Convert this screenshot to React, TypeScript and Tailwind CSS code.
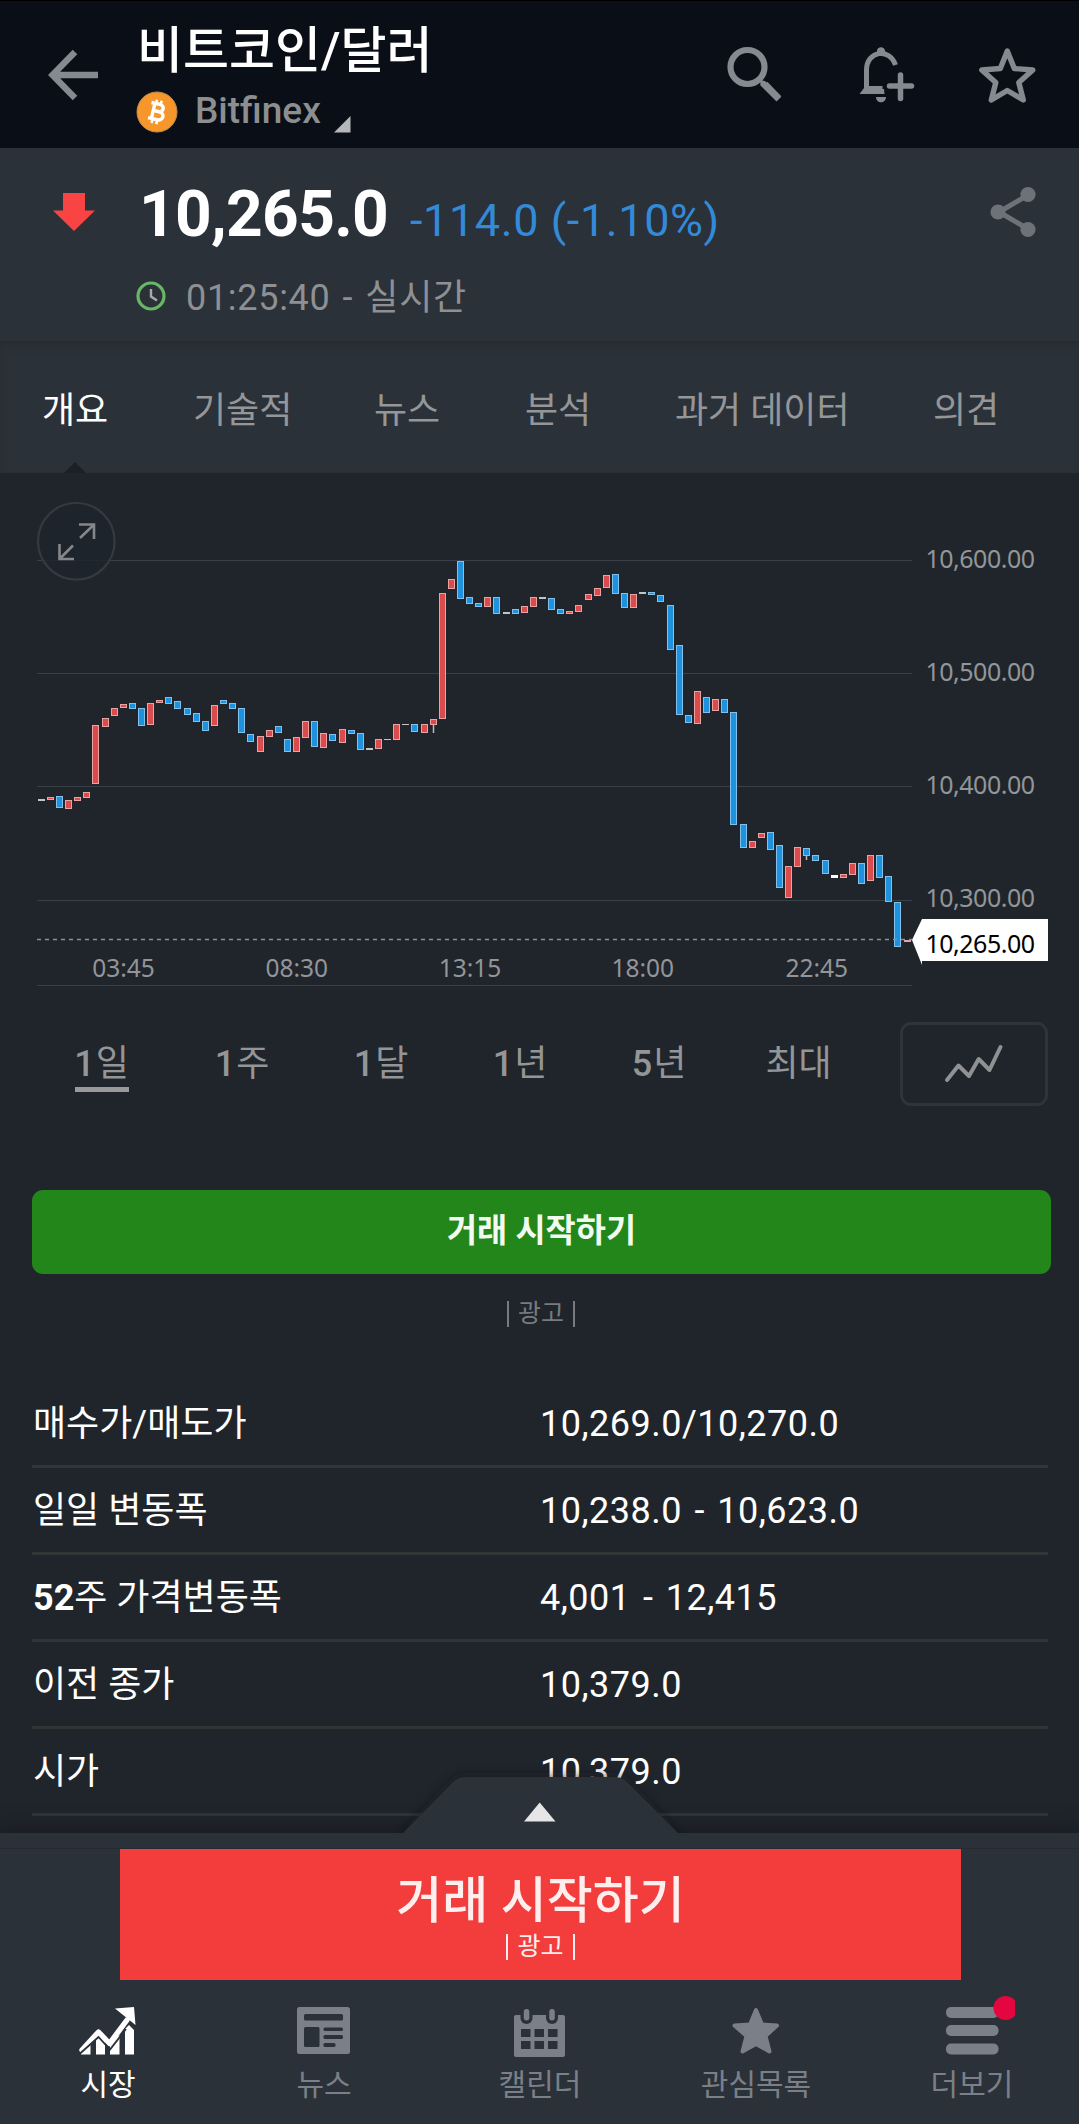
import React from "react";

type Kind = "r" | "b" | "w";
type Candle = [number, number, Kind, number?];

/* Candle bodies: top, bottom (in thirds of a pixel), colour, optional wick end */
const candles: Candle[] = [
  [957, 963, "w"], [951, 960, "r"], [948, 984, "b"], [960, 987, "r"], [951, 963, "r"], [936, 954, "r"],
  [735, 912, "r"], [714, 741, "r"], [684, 708, "r"], [672, 684, "r"], [669, 687, "b"], [684, 738, "b"],
  [669, 735, "r"], [660, 669, "r"], [651, 672, "b"], [663, 687, "b"], [684, 705, "b"], [699, 726, "b"],
  [723, 753, "b"], [675, 738, "r"], [660, 672, "b"], [669, 687, "b"], [684, 759, "b"], [762, 786, "b"],
  [768, 816, "r"], [750, 771, "r"], [738, 759, "b"], [777, 816, "b"], [771, 816, "r"], [723, 774, "r"],
  [723, 801, "b"], [759, 804, "r"], [762, 783, "b"], [747, 789, "r"], [750, 762, "b"], [759, 810, "b"],
  [804, 810, "w"], [777, 807, "r"], [777, 780, "w"], [732, 780, "r"], [732, 735, "w"], [732, 756, "b"],
  [732, 759, "r"], [717, 735, "r", 759], [339, 717, "r"], [297, 327, "r"], [243, 357, "b"], [351, 372, "b"],
  [369, 381, "b"], [351, 381, "r"], [351, 402, "b"], [396, 402, "w"], [387, 402, "b"], [378, 399, "r"],
  [351, 381, "r"], [351, 357, "w"], [354, 390, "b"], [387, 402, "b"], [393, 402, "r"], [375, 396, "r"],
  [342, 360, "r"], [324, 348, "r"], [285, 324, "r"], [282, 342, "b"], [339, 384, "b"], [342, 384, "r"],
  [336, 342, "w"], [336, 345, "b"], [345, 366, "b"], [375, 510, "b"], [495, 705, "b"], [705, 729, "b"],
  [633, 732, "r"], [651, 699, "b"], [657, 693, "r"], [657, 699, "b"], [696, 1035, "b"], [1032, 1104, "b"],
  [1083, 1104, "r"], [1059, 1074, "r"], [1056, 1110, "b"], [1095, 1224, "b"], [1158, 1254, "r"], [1101, 1161, "r"],
  [1104, 1128, "b", 1140], [1125, 1143, "b"], [1140, 1182, "b"], [1185, 1194, "w"], [1182, 1194, "r"], [1149, 1185, "r"],
  [1149, 1212, "b"], [1125, 1203, "r"], [1125, 1194, "b"], [1188, 1266, "b"], [1266, 1401, "b"], [1380, 1386, "r"],
];

const fills = { r: "#da4b4d", b: "#1f92dd", w: "#c9cccf" };
const edges = { r: "#e9a3a3", b: "#83c1ec", w: "#c9cccf" };

function Header() {
  return (
    <header className="flex h-[148px] bg-[#0a0e16] border-t border-black">
      <svg className="mt-[47px] ml-[46px] h-[54px] w-[56px] shrink-0" viewBox="46 48 56 54" fill="none" stroke="#858a91" strokeWidth="6.4">
        <path d="M98 75H53M75 52L52.500 75L75 98" />
      </svg>
      <div className="ml-[36px] w-[560px]">
        <h1 className="mt-[21px] ml-[-1px] h-[58px] text-[50px] leading-[58px] font-medium text-white whitespace-nowrap">비트코인/달러</h1>
        <div className="mt-[10px] flex h-[44px] items-center">
          <svg className="ml-[-2px] h-[42px] w-[42px]" viewBox="0 0 42 42">
            <circle cx="21" cy="21" r="20" fill="#f7972b" stroke="#b98c4e" strokeWidth="1" />
            <g transform="rotate(13 21 21)" fill="none" stroke="#fff" strokeWidth="3.4">
              <path d="M13.500 13h8.500c5.800 0 5.800 7.300 0 7.300h-5M17 13v15.500M13.500 28.500h9.500c6.400 0 6.400-8.200 0-8.200h-5" />
              <path d="M18.200 9v4M23 9v4M18.200 28.500v4.500M23 28.500v4.500" strokeWidth="2.600" />
            </g>
          </svg>
          <span className="mt-[-3px] ml-[17px] w-[127px] text-[37px] leading-none font-medium text-[#8c8e90]">Bitfinex</span>
          <svg className="mt-[25px] ml-[12px] h-[17px] w-[17px]" viewBox="0 0 17 17"><path d="M16.500 0V16.500H0z" fill="#b5b7ba" /></svg>
        </div>
      </div>
      <svg className="ml-auto h-[147px] w-[379px] shrink-0" viewBox="700 1 379 147" fill="none" stroke="#858a91">
        <circle cx="747.500" cy="67" r="17" strokeWidth="6.200" />
        <path d="M760 80l5 1 16 16-4.500 4.500-16-16z" fill="#858a91" stroke="none" />
        <path d="M765 84L779 98.500" strokeWidth="6.500" />
        <path d="M866.500 92V70c0-19 23-23 29-5" strokeWidth="5" />
        <path d="M859.500 94l6-8h17v3l1.500 0 .5 5zM876 97h10c0 7-10 7-10 0zM877 56v-5c0-5 8-5 8 0v5z" fill="#858a91" stroke="none" />
        <path d="M889.500 86H911.500M900.500 75V98.500" strokeWidth="5.500" strokeLinecap="round" />
        <path d="M1007.300 51l7 17.500 18.500 1.500-14 12.500 4.500 17.500-16-9.500-16 9.500 4.500-17.500-14-12.500 18.500-1.500z" strokeWidth="5.400" strokeLinejoin="round" />
      </svg>
    </header>
  );
}

function Quote() {
  return (
    <section className="flex h-[194px] bg-[#2b3138] shadow-[inset_0_-1px_0_#262b31]">
      <svg className="mt-[44px] ml-[53px] h-[40px] w-[42px] shrink-0" viewBox="0 0 42 40"><path d="M10 1h22v17.500h10L21 39 0 18.500h10z" fill="#fa4444" /></svg>
      <div className="ml-[44px] flex-1">
        <div className="mt-[31px] flex h-[72px] items-baseline whitespace-nowrap leading-[72px]">
          <span className="text-[64px] font-bold tracking-[-0.700px] text-white">10,265.0</span>
          <span className="ml-[22px] text-[45px] tracking-[0.600px] text-[#338ad9]">-114.0 (-1.10%)</span>
        </div>
        <div className="mt-[22px] flex h-[46px] items-center">
          <svg className="ml-[-3px] h-[30px] w-[30px]" viewBox="0 0 30 30" fill="none">
            <circle cx="15" cy="15" r="13" stroke="#69b667" strokeWidth="3.200" />
            <path d="M15 8v7.500l6 4" stroke="#a7a9ad" strokeWidth="2.400" />
          </svg>
          <span className="mt-[3px] ml-[20px] text-[36px] leading-none tracking-[0.700px] [word-spacing:2.500px] text-[#8e9093]">01:25:40 - 실시간</span>
        </div>
      </div>
      <svg className="mt-[38px] mr-[41px] h-[52px] w-[48px]" viewBox="0 0 48 52" fill="#6d7178">
        <path d="M38 9L9 26l29 17" fill="none" stroke="#6d7178" strokeWidth="5" />
        <circle cx="38" cy="8.500" r="7.600" /><circle cx="8" cy="26" r="7.600" /><circle cx="38" cy="43.500" r="7.600" />
      </svg>
    </section>
  );
}

const tabs = [
  { t: "개요", c: "w-[151px]" }, { t: "기술적", c: "w-[181px]" }, { t: "뉴스", c: "w-[151px]" },
  { t: "분석", c: "w-[150px]" }, { t: "과거 데이터", c: "w-[258px]" }, { t: "의견", c: "w-[80px]" },
];

function Tabs() {
  return (
    <nav className="relative flex h-[131px] items-center bg-[#2b3138] pl-[42px] shadow-[inset_0_5px_8px_-3px_#252b2f]">
      {tabs.map((x, i) => (
        <span key={x.t} className={`${x.c} mt-[7px] h-[60px] shrink-0 whitespace-nowrap text-[36px] leading-[60px] ${i === 0 ? "text-white" : "text-[#949698]"}`}>{x.t}</span>
      ))}
      <svg className="absolute bottom-0 left-[64px] h-[11px] w-[22px]" viewBox="0 0 22 11"><path d="M0 11L11 0l11 11z" fill="#1a2027" /></svg>
    </nav>
  );
}

function Chart() {
  return (
    <svg className="block h-[527px] w-full" viewBox="0 473 1079 527" fontFamily="'Noto Sans', sans-serif">
      {[560.5, 673.5, 786.5, 900.5, 985.5].map((y) => <path key={y} d={`M37 ${y}H912`} stroke="#3a4047" strokeWidth="1.200" />)}
      <circle cx="76.300" cy="541.300" r="38.300" fill="#1f242b" fillOpacity=".85" stroke="#353a42" strokeWidth="2.200" />
      <path d="M79 524.500H94V539M93.500 525L80 538M73 545.500L60 558.500M59.500 544V559H74" fill="none" stroke="#85878a" strokeWidth="2.600" />
      {candles.map(([a, b, k, wick], i) => {
        const x = Math.round(37.8 + i * 9.113);
        const y = Math.round(480 + a / 3);
        const h = Math.round((b - a) / 3);
        return (
          <g key={i}>
            {h < 3 || k === "w"
              ? <rect x={x} y={y} width="7" height={h} fill={i === 87 ? "#fff" : i === 95 ? "#e9a3a3" : "#c2c5c8"} />
              : <rect x={x + 0.5} y={y + 0.5} width="6" height={h - 1} fill={fills[k]} stroke={edges[k]} strokeWidth="1" />}
            {wick && <path d={`M${x + 3.500} ${y + h}V${480 + wick / 3}`} stroke="#b9bcc0" strokeWidth="1.500" />}
          </g>
        );
      })}
      <path d="M37 939.500H912" stroke="#8d9094" strokeWidth="1.300" strokeDasharray="4 4" />
      <path d="M912 940L922 919H1048V961H922V965z" fill="#fff" />
      <g fontSize="25" fill="#939598">
        <text x="925.500" y="568" textLength="109.500">10,600.00</text>
        <text x="925.500" y="681" textLength="109.500">10,500.00</text>
        <text x="925.500" y="794" textLength="109.500">10,400.00</text>
        <text x="925.500" y="907" textLength="109.500">10,300.00</text>
        <text x="925.500" y="953" textLength="109.500" fill="#000">10,265.00</text>
      </g>
      <g fontSize="24.500" fill="#939598" textAnchor="middle">
        <text x="123.500" y="976.500">03:45</text>
        <text x="296.700" y="976.500">08:30</text>
        <text x="470" y="976.500">13:15</text>
        <text x="642.700" y="976.500">18:00</text>
        <text x="816.700" y="976.500">22:45</text>
      </g>
    </svg>
  );
}

const ranges = [["1", "일"], ["1", "주"], ["1", "달"], ["1", "년"], ["5", "년"], ["", "최대"]];

function Ranges() {
  return (
    <div className="flex h-[190px] pl-[32px] pt-[22px]">
      {ranges.map(([n, t], i) => (
        <div key={n + t} className="flex w-[139px] shrink-0 flex-col items-center">
          <span className={`mt-[14px] h-[51px] text-[36px] leading-[56px] text-[#939597] ${i === 0 ? "" : "pl-[3px]"}`}><b className="mr-px font-medium">{n}</b>{t}</span>
          {i === 0 && <span className="h-[5px] w-[54px] bg-[#98999b]" />}
        </div>
      ))}
      <div className="ml-[34px] h-[84px] w-[148px] rounded-[11px] border-[3px] border-[#2f343b]">
        <svg className="block h-[78px] w-[142px]" viewBox="903 1025 142 78" fill="none" stroke="#8f9193" strokeWidth="4" strokeLinecap="round" strokeLinejoin="round">
          <path d="M947 1080L958.500 1065.500 969 1076 978.700 1059 989.500 1070 1000.500 1047" />
        </svg>
      </div>
    </div>
  );
}

function AdTag({ className }: { className: string }) {
  return (
    <div className={`flex items-center justify-center gap-[9px] text-[25px] leading-[26px] ${className}`}>
      <i className="h-[26px] w-[2px] bg-current" />
      <span>광고</span>
      <i className="h-[26px] w-[2px] bg-current" />
    </div>
  );
}

const rows = [
  ["", "매수가/매도가", "10,269.0/10,270.0"],
  ["", "일일 변동폭", "10,238.0 - 10,623.0"],
  ["52", "주 가격변동폭", "4,001 - 12,415"],
  ["", "이전 종가", "10,379.0"],
  ["", "시가", "10,379.0"],
];

const Market = () => (
  <svg className="h-[60px] w-[62px]" viewBox="77 2000 62 60" fill="#fff">
    <path d="M82 2050L98.500 2032 109.500 2043.500 127 2020" fill="none" stroke="#fff" strokeWidth="5.400" strokeLinecap="round" strokeLinejoin="round" />
    <path d="M115 2008.500l19-1.500 1.500 18zM81 2049h5l4.500-5v10.500h-9.500zM96 2038l3-4 6 6.500v14h-9zM110 2043l9.500-8v19.500h-9.500zM125 2029l4-4 5 5v24.500h-9z" />
    <path d="M79.500 2054L98.500 2037 110 2049.500 126 2029" fill="none" stroke="#2b3138" strokeWidth="1.800" />
  </svg>
);
const News = () => (
  <svg className="h-[60px] w-[62px]" viewBox="293 2000 62 60">
    <rect x="297" y="2007" width="53" height="47" rx="2.500" fill="#7b7f87" />
    <g fill="#2b3138"><rect x="304" y="2014" width="39" height="6.500" rx="1.500" /><rect x="304" y="2027" width="15.500" height="20" rx="1.500" /><rect x="323.500" y="2027.500" width="19.500" height="3.600" rx="1.500" /><rect x="323.500" y="2035" width="19.500" height="4" rx="1.500" /><rect x="323.500" y="2043" width="12" height="4" rx="1.500" /></g>
  </svg>
);
const Calendar = () => (
  <svg className="h-[60px] w-[62px]" viewBox="509 2000 62 60">
    <rect x="514" y="2015" width="51" height="42" rx="2" fill="#7b7f87" />
    <g fill="#2b3138">
      {[521, 534.5, 548].map((x) => [2029, 2041].map((y) => <rect key={`${x}${y}`} x={x} y={y} width="9.500" height="8" />))}
      <rect x="520.500" y="2005" width="12" height="19" rx="6" /><rect x="546" y="2005" width="12" height="19" rx="6" />
    </g>
    <g fill="#7b7f87"><rect x="523.800" y="2009" width="5.500" height="11.500" rx="2.700" /><rect x="549.300" y="2009" width="5.500" height="11.500" rx="2.700" /></g>
  </svg>
);
const Star = () => (
  <svg className="h-[60px] w-[62px]" viewBox="725 2000 62 60" fill="#7b7f87" stroke="#7b7f87" strokeWidth="4" strokeLinejoin="round">
    <path d="M756 2010l6 14.500 15 1-11.500 10.500 4 15.500-13.500-7.500-13.500 7.500 4-15.500-12-10.500 15.500-1z" />
  </svg>
);
const More = () => (
  <svg className="h-[60px] w-[86px]" viewBox="929 1996 86 60">
    <g fill="#7b7f87"><rect x="946" y="2007" width="52.500" height="11" rx="5" /><rect x="946" y="2025" width="52.500" height="11" rx="5" /><rect x="946" y="2043.500" width="52.500" height="11" rx="5" /></g>
    <circle cx="1005.500" cy="2008" r="12" fill="#e3063f" />
  </svg>
);

const items = [
  { t: "시장", I: Market }, { t: "뉴스", I: News }, { t: "캘린더", I: Calendar }, { t: "관심목록", I: Star }, { t: "더보기", I: More },
];

export default function App() {
  return (
    <div className="relative h-[2124px] w-[1079px] overflow-hidden bg-[#1f252b] font-['Roboto','Noto_Sans_CJK_KR',sans-serif]">
      <Header />
      <Quote />
      <Tabs />
      <Chart />
      <Ranges />
      <div className="mr-[28px] ml-[32px] h-[84px] rounded-[11px] bg-[#23861a] text-center text-[32.800px] leading-[82px] font-bold text-[#f2fbef]">거래 시작하기</div>
      <AdTag className="mt-[27px] ml-[3px] h-[26px] text-[#777b80]" />
      <div className="mt-[54px] mr-[31px] ml-[32px]">
        {rows.map(([n, a, b], i) => (
          <div key={i} className="flex h-[87px] border-b-[3px] border-[#323535] text-[36px] leading-[87px] text-white">
            <span className="w-[508px] pl-px"><b className="font-bold">{n}</b>{a}</span>
            <span className="tracking-[0.500px] [word-spacing:3px]">{b}</span>
          </div>
        ))}
      </div>
      <footer className="absolute inset-x-0 bottom-0 h-[291px] bg-[#2b3138] shadow-[0_-3px_14px_4px_#1a1d24]">
        <svg className="absolute -top-[80px] left-[380px] h-[80px] w-[320px]" viewBox="380 1753 320 80">
          <defs><filter id="s" x="-20%" y="-40%" width="140%" height="180%"><feGaussianBlur stdDeviation="6" /></filter></defs>
          <path d="M403 1835L453 1782Q458 1777 465 1777H615Q622 1777 627 1782L678 1835z" fill="#15181d" opacity=".7" filter="url(#s)" />
          <path d="M403 1833L453 1782Q458 1777 465 1777H615Q622 1777 627 1782L678 1833z" fill="#2b3138" />
          <path d="M524 1821.500L539.700 1802.500 555.500 1821.500z" fill="#e6e6e6" />
        </svg>
        <div className="h-[16px] border-b border-[#252a31]" />
        <div className="ml-[120px] h-[131px] w-[841px] bg-[#f23d3c] pt-[21px] text-center text-[#ffeeee]">
          <div className="h-[62px] text-[50px] leading-[62px] font-medium">거래 시작하기</div>
          <AdTag className="mt-[2px] h-[26px]" />
        </div>
        <div className="flex w-[1080px] pt-[20px]">
          {items.map(({ t, I }, i) => (
            <div key={t} className="flex w-[216px] flex-col items-center">
              <div className={`flex h-[60px] justify-center ${i === 4 ? "mt-[-4px] mb-[4px]" : ""}`}><I /></div>
              <span className={`mt-[5px] h-[40px] text-[30px] leading-[40px] ${i === 0 ? "text-white" : "text-[#7b7f87]"}`}>{t}</span>
            </div>
          ))}
        </div>
      </footer>
    </div>
  );
}
